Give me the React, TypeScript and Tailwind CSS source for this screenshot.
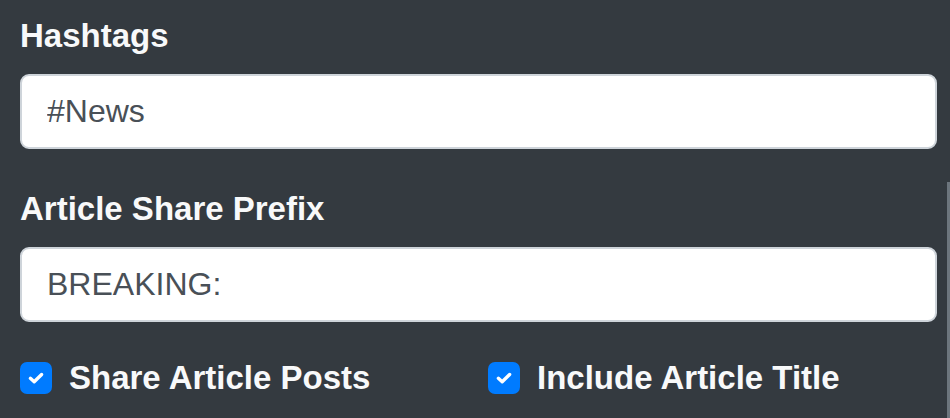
import React from "react";

const CheckBox = ({ label }: { label: string }) => (
  <label className="flex items-center gap-[17px] leading-[40px]">
    <span className="flex h-[32px] w-[32px] items-center justify-center rounded-[7px] bg-[#007bff]">
      <svg width="18" height="18" viewBox="0 0 16 16">
        <path
          d="M3 8.3 L6.4 11.4 L13 4.9"
          fill="none"
          stroke="white"
          strokeWidth="3"
          strokeLinecap="round"
          strokeLinejoin="round"
        />
      </svg>
    </span>
    <span className="text-[33px] font-bold text-[#f8f9fa]">{label}</span>
  </label>
);

const Field = ({ label, value }: { label: string; value: string }) => (
  <div className="mb-[40px]">
    <div className="mb-[18px] text-[33px] font-bold leading-[40px] text-[#f8f9fa]">
      {label}
    </div>
    <input
      readOnly
      value={value}
      className="block h-[75px] w-full rounded-[9px] border-2 border-[#ced4da] bg-white px-[25px] text-[32px] text-[#495057] outline-none"
    />
  </div>
);

export default function App() {
  return (
    <div
      className="relative h-[418px] w-[950px] overflow-hidden bg-[#343a40] pl-[20px] pr-[13px] pt-[16px]"
      style={{ fontFamily: '"Liberation Sans", Arial, sans-serif' }}
    >
      <Field label="Hashtags" value="#News" />
      <Field label="Article Share Prefix" value="BREAKING:" />

      <div className="-mt-[4px] grid grid-cols-2 gap-x-[19px]">
        <CheckBox label="Share Article Posts" />
        <CheckBox label="Include Article Title" />
      </div>

      {/* scrollbar thumb peeking in at the right edge */}
      <div className="absolute right-0 top-[182px] h-[236px] w-[3px] bg-[#6c757d]" />
    </div>
  );
}
